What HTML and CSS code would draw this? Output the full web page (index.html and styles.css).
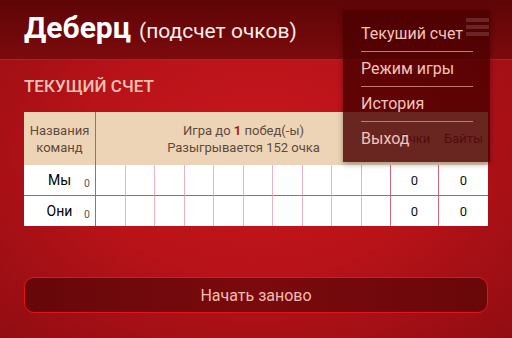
FILE: index.html
```html
<!DOCTYPE html>
<html lang="ru">
<head>
<meta charset="utf-8">
<title>Деберц</title>
<link rel="stylesheet" href="styles.css">
</head>
<body>
<div class="app">
  <header class="topbar">
    <h1 class="title"><b>Деберц</b> <span class="sub">(подсчет очков)</span></h1>
    <div class="burger"><i></i><i></i><i></i></div>
  </header>
  <main class="content">
    <h2 class="section">ТЕКУЩИЙ СЧЕТ</h2>
    <div class="score">
      <div class="hcell names"><span>Названия<br>команд</span></div>
      <div class="hcell game"><span>Игра до <b class="red">1</b> побед(-ы)<br>Разыгрывается 152 очка</span></div>
      <div class="hcell"><span>Очки</span></div>
      <div class="hcell"><span>Байты</span></div>

      <div class="cell team">Мы<span class="sub0">0</span></div>
      <div class="cell"></div><div class="cell"></div><div class="cell"></div><div class="cell"></div><div class="cell"></div>
      <div class="cell"></div><div class="cell"></div><div class="cell"></div><div class="cell"></div><div class="cell"></div>
      <div class="cell num">0</div>
      <div class="cell num last">0</div>

      <div class="cell team r2">Они<span class="sub0">0</span></div>
      <div class="cell r2"></div><div class="cell r2"></div><div class="cell r2"></div><div class="cell r2"></div><div class="cell r2"></div>
      <div class="cell r2"></div><div class="cell r2"></div><div class="cell r2"></div><div class="cell r2"></div><div class="cell r2"></div>
      <div class="cell num r2">0</div>
      <div class="cell num last r2">0</div>
    </div>
    <div class="spacer"></div>
    <button class="restart">Начать заново</button>
  </main>
  <nav class="menu">
    <div class="item">Текуший счет</div>
    <div class="item">Режим игры</div>
    <div class="item">История</div>
    <div class="item noline">Выход</div>
  </nav>
</div>
</body>
</html>
```
FILE: styles.css
```css
* { box-sizing: border-box; }
html, body { margin: 0; padding: 0; }
body {
  width: 512px;
  height: 338px;
  overflow: hidden;
  font-family: Roboto, "Noto Sans", sans-serif;
  background: #a01218;
}
.app {
  position: relative;
  width: 512px;
  height: 338px;
  display: flex;
  flex-direction: column;
  background: radial-gradient(ellipse 75% 80% at 50% 45%, #c8161e 0%, #b81319 45%, #8e0c11 100%);
}
.topbar {
  height: 60px;
  flex: none;
  display: flex;
  align-items: center;
  padding: 0 24px;
  background: linear-gradient(180deg, #5e0507 0%, #6e080a 55%, #7c0b0d 100%);
  border-bottom: 1px solid #c8141b;
  position: relative;
}
.title {
  margin: 0;
  color: #fff;
  font-weight: 400;
  white-space: nowrap;
  line-height: 1;
  margin-top: -5px;
}
.title b { font-size: 30px; font-weight: 700; }
.title .sub { font-size: 21px; color: #fbeee8; }
.burger {
  position: absolute;
  left: 466px;
  top: 18px;
  width: 23px;
  display: flex;
  flex-direction: column;
  gap: 3px;
}
.burger i {
  display: block;
  height: 4px;
  background: #f0d0d0;
}
.content {
  flex: 1;
  display: flex;
  flex-direction: column;
  padding: 0 24px 25px;
}
.section {
  margin: 17px 0 16px;
  font-size: 17px;
  font-weight: 500;
  line-height: 19px;
  color: #f6c2b4;
  letter-spacing: 0;
}
.score {
  display: grid;
  grid-template-columns: 72px repeat(10, 1fr) 48px 49px;
  grid-template-rows: 53px 31px 30px;
  background: #fff;
}
.hcell {
  background: #edd4b6;
  color: #5e4a40;
  font-size: 13px;
  line-height: 17px;
  display: flex;
  align-items: center;
  justify-content: center;
  text-align: center;
}
.hcell.names { border-right: 1px solid #c85a58; }
.hcell.game { grid-column: span 10; }
.red { color: #b3161a; font-weight: 700; }
.cell {
  border-right: 1px solid #eab2bd;
  border-bottom: 1px solid #c9576a;
  position: relative;
  font-size: 13px;
  color: #111;
  display: flex;
  align-items: center;
  justify-content: center;
}
.cell.r2 { border-bottom: none; }
.cell.last { border-right: none; }
.cell.team { font-size: 14px; color: #000; border-right-color: #c85a66; }
.cell.num { border-left: 1px solid #d4687a; margin-left: -1px; }
.sub0 {
  position: absolute;
  right: 5px;
  bottom: 5px;
  font-size: 10.5px;
  font-weight: 400;
  color: #555;
}
.spacer { flex: 1; }
.restart {
  height: 36px;
  border: 1.5px solid #e3141d;
  border-radius: 10px;
  background: linear-gradient(90deg, #660709 0%, #7a0a0e 50%, #690709 100%);
  color: #f3bcb2;
  font-family: inherit;
  font-size: 16px;
  padding: 0;
}
.menu {
  position: absolute;
  left: 343px;
  top: 10px;
  width: 147px;
  height: 152px;
  padding: 7px 17px 7px 18px;
  background: rgba(76, 0, 0, 0.82);
  box-shadow: 0 2px 6px rgba(0, 0, 0, 0.35);
}
.item {
  padding: 7px 0 8px;
  line-height: 19px;
  font-size: 16px;
  color: #f2c4bb;
  border-bottom: 1px solid #c27a76;
  white-space: nowrap;
}
.item.noline { border-bottom: none; }
```
